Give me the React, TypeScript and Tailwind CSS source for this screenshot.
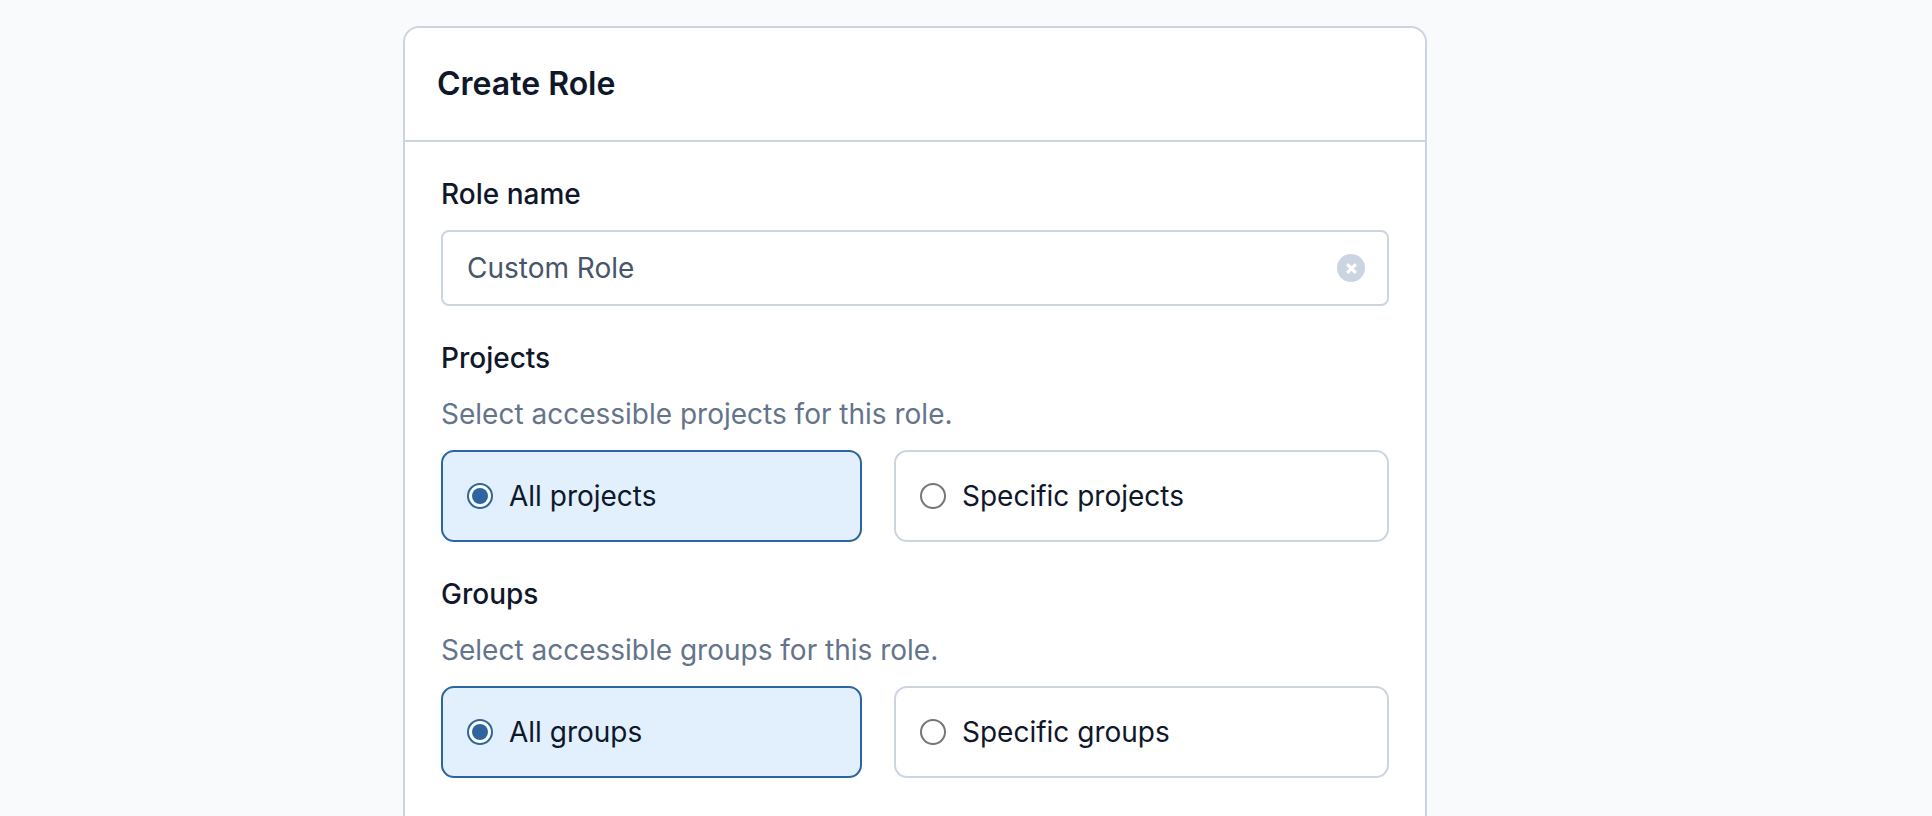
import React from 'react';

const RadioCard = ({ label, checked, className }: { label: string; checked?: boolean; className: string }) => (
  <label
    className={`flex h-[92px] items-center rounded-[13px] border-2 pl-[24px] ${
      checked ? 'border-[#2c659f] bg-[#e1f0fc]' : 'border-[#cbd5e1] bg-white'
    } ${className}`}
  >
    {checked ? (
      <span className="flex h-[26px] w-[26px] items-center justify-center rounded-full border-2 border-[#2c659f] bg-white">
        <span className="h-[16px] w-[16px] rounded-full bg-[#2c659f]" />
      </span>
    ) : (
      <span className="h-[26px] w-[26px] rounded-full border-2 border-[#767676] bg-white" />
    )}
    <span className="ml-[16px] text-[28px] text-[#0f172a]">{label}</span>
  </label>
);

export default function App() {
  return (
    <div className="h-[816px] overflow-hidden bg-[#f9fafb] pl-[403px] pt-[26px] font-['Inter',sans-serif] antialiased">
      <div className="w-[1024px] rounded-t-[16px] border-2 border-[#cbd5e1] bg-white pb-[80px]">
        <div className="flex h-[114px] items-center border-b-2 border-[#cbd5e1] pl-[32px]">
          <h1 className="text-[32px] font-semibold text-[#0f172a]">Create Role</h1>
        </div>

        <div className="px-[36px]">
          <div className="pt-[32px] text-[28px] font-medium leading-[40px] text-[#0f172a]">Role name</div>
          <div className="relative mt-[16px]">
            <input
              type="text"
              readOnly
              value="Custom Role"
              className="h-[76px] w-full rounded-[8px] border-2 border-[#cbd5e1] bg-white pl-[24px] text-[28px] text-[#475569] outline-none"
            />
            <span className="absolute right-[24px] top-[24px] flex h-[28px] w-[28px] items-center justify-center rounded-full bg-[#cbd5e1]">
              <svg width="13" height="13" viewBox="0 0 12 12" fill="none" stroke="white" strokeWidth="3">
                <path d="M2 2l8 8M10 2l-8 8" />
              </svg>
            </span>
          </div>

          <div className="mt-[32px] text-[28px] font-medium leading-[40px] text-[#0f172a]">Projects</div>
          <p className="mt-[16px] text-[28px] leading-[40px] text-[#64748b]">Select accessible projects for this role.</p>
          <div className="mt-[16px] flex gap-[32px]">
            <RadioCard label="All projects" checked className="w-[421px]" />
            <RadioCard label="Specific projects" className="flex-1" />
          </div>

          <div className="mt-[32px] text-[28px] font-medium leading-[40px] text-[#0f172a]">Groups</div>
          <p className="mt-[16px] text-[28px] leading-[40px] text-[#64748b]">Select accessible groups for this role.</p>
          <div className="mt-[16px] flex gap-[32px]">
            <RadioCard label="All groups" checked className="w-[421px]" />
            <RadioCard label="Specific groups" className="flex-1" />
          </div>
        </div>
      </div>
    </div>
  );
}
